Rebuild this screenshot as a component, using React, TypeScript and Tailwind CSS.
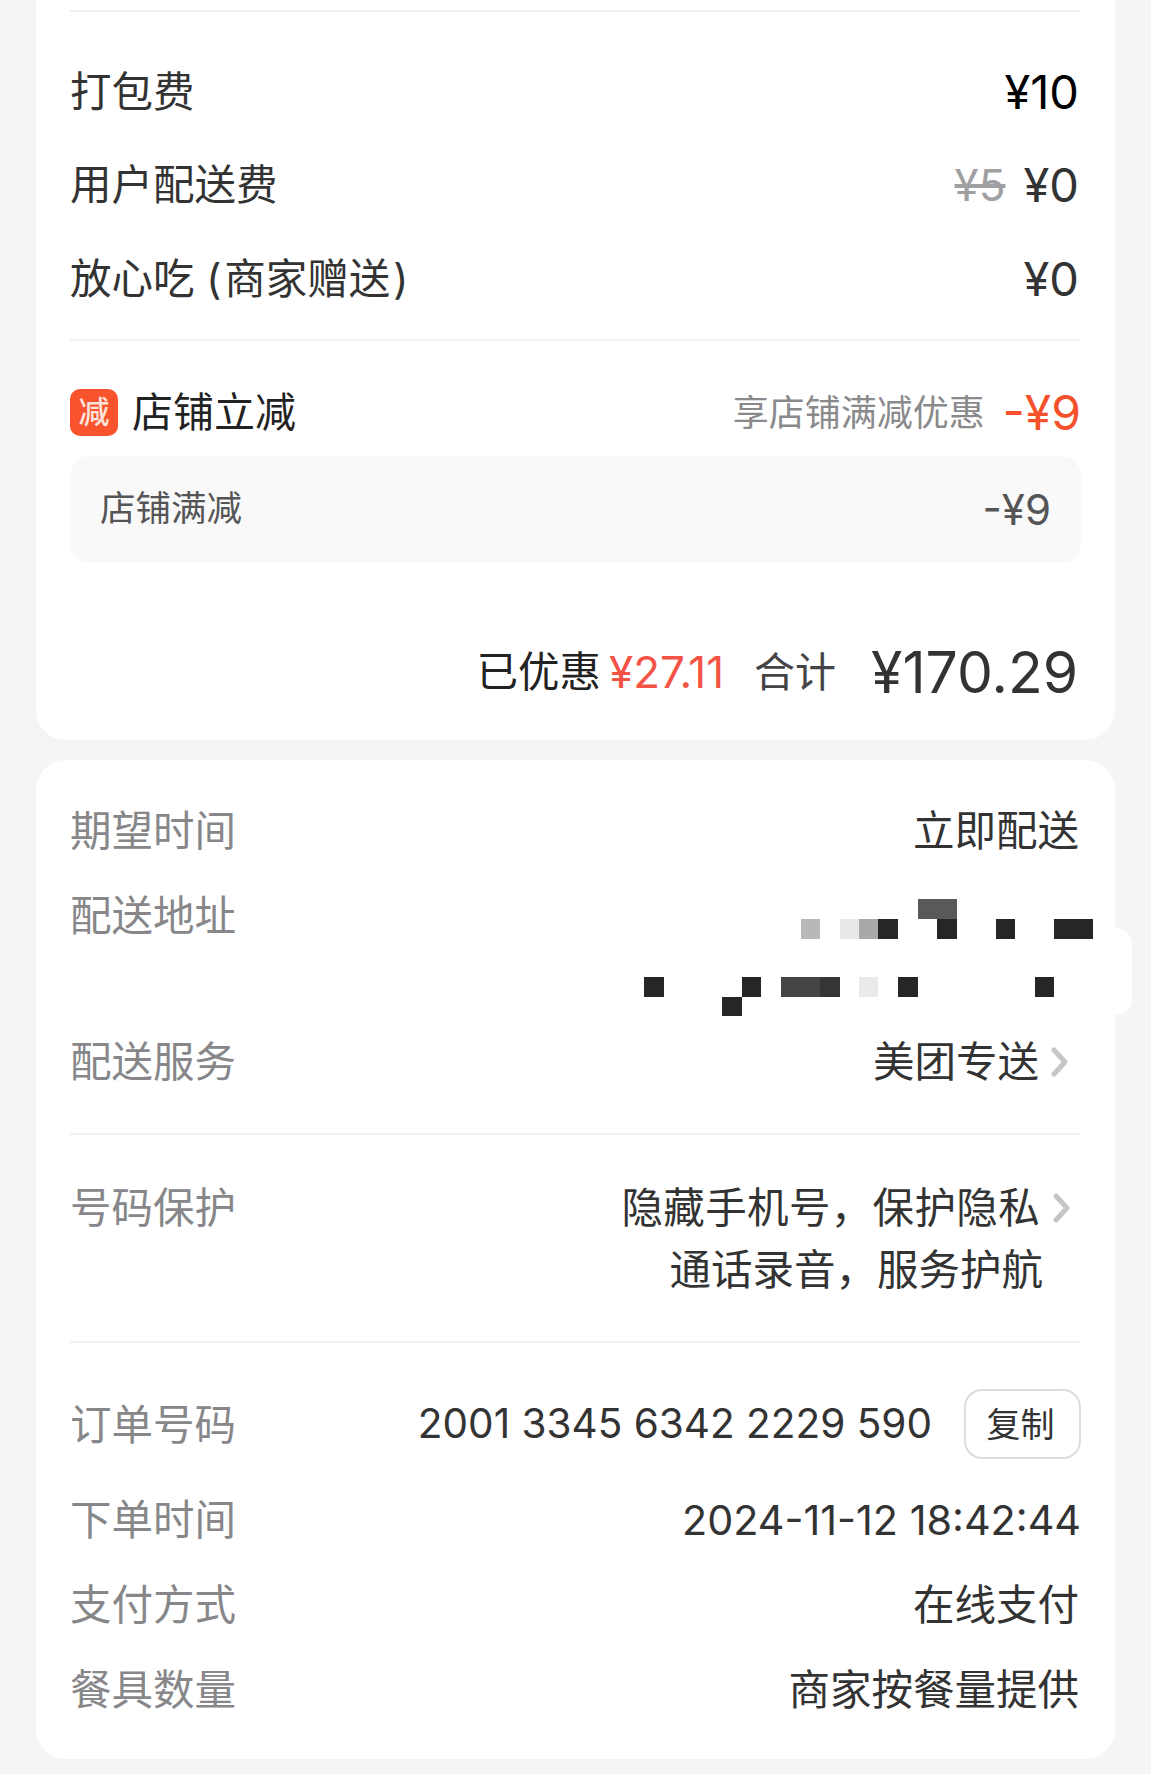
import React from 'react';

const font = { fontFamily: 'Inter, "Noto Sans CJK SC", sans-serif' };

// mosaic squares over the delivery address, in page coordinates
const mosaic = [
  [801, 919, 19, 20, '#b8b8ba'],
  [840, 919, 19, 20, '#e8e8ea'],
  [859, 919, 19, 20, '#a9a9ab'],
  [878, 919, 20, 20, '#262628'],
  [918, 899, 39, 20, '#59595b'],
  [937, 919, 20, 20, '#262628'],
  [996, 919, 19, 20, '#262628'],
  [1054, 919, 39, 20, '#262628'],
  [644, 977, 20, 20, '#262628'],
  [742, 977, 19, 20, '#262628'],
  [722, 997, 20, 19, '#262628'],
  [781, 977, 39, 20, '#444446'],
  [820, 977, 20, 20, '#353537'],
  [859, 977, 19, 20, '#eaeaea'],
  [898, 977, 20, 20, '#262628'],
  [1035, 977, 19, 20, '#262628'],
] as const;

const Chevron: React.FC = () => (
  <svg width="18" height="30" viewBox="0 0 18 30" className="shrink-0">
    <path d="M3 3 L14 15 L3 27" fill="none" stroke="#c6c6c8" strokeWidth="5" strokeLinecap="round" strokeLinejoin="round" />
  </svg>
);

const FeeRow: React.FC<{ label: React.ReactNode; children: React.ReactNode }> = ({ label, children }) => (
  <div className="flex h-[93.5px] items-center justify-between text-[41.5px] text-[#333333]">
    <span>{label}</span>
    {children}
  </div>
);

const InfoRow: React.FC<{ label: string; value: string; height: string }> = ({ label, value, height }) => (
  <div className={`flex items-center justify-between text-[41.5px] ${height}`}>
    <span className="text-[#87878a]">{label}</span>
    <span className="pr-[2px] text-[#333333]">{value}</span>
  </div>
);

const App: React.FC = () => {
  return (
    <div className="relative flex h-[1774px] w-full flex-col gap-[20px] overflow-hidden bg-[#f5f5f7] px-[36px]" style={font}>
      <section className="h-[740px] rounded-b-[30px] bg-white px-[34px] pt-[10px]">
        <div className="h-[2px] bg-[#f1f1f3]" />
        <div className="pt-[33px] pb-[13px]">
          <FeeRow label="打包费">
            <span className="pr-[2px] text-[47px] text-black">¥10</span>
          </FeeRow>
          <FeeRow label="用户配送费">
            <span className="flex items-center gap-[18px] pr-[2px] text-[47px]">
              <span className="text-[44px] text-[#a0a0a2] line-through">¥5</span>
              <span>¥0</span>
            </span>
          </FeeRow>
          <FeeRow label={<>放心吃 (<span className="mx-[3px]">商家赠送</span>)</>}>
            <span className="pr-[2px] text-[47px]">¥0</span>
          </FeeRow>
        </div>
        <div className="h-[2px] bg-[#f1f1f3]" />
        <div className="flex h-[115px] items-center justify-between pt-[29px]">
          <div className="flex items-center gap-[14px]">
            <span className="flex h-[47px] w-[48px] items-center justify-center rounded-[10px] bg-[#f9532d] text-[31px] font-medium text-[#fde3da]">减</span>
            <span className="text-[41px] text-[#222222]">店铺立减</span>
          </div>
          <div className="flex items-center gap-[18px]">
            <span className="text-[36px] text-[#8a8a8c]">享店铺满减优惠</span>
            <span className="text-[48px] leading-none text-[#f4512c]">-¥9</span>
          </div>
        </div>
        <div className="flex h-[107px] items-center justify-between rounded-[20px] bg-[#f9f9fa] px-[30px] text-[35.5px] text-[#555557]">
          <span>店铺满减</span>
          <span className="text-[42px]">-¥9</span>
        </div>
        <div className="mt-[67px] flex items-center justify-end pr-[3px]">
          <span className="text-[41.5px] text-[#222222]">已优惠</span>
          <span className="ml-[8px] text-[44px] text-[#f25345]">¥27.11</span>
          <span className="ml-[30px] text-[41px] text-[#444446]">合计</span>
          <span className="ml-[35px] text-[57px] text-[#333333]">¥170.29</span>
        </div>
      </section>

      <section className="h-[999px] rounded-[30px] bg-white px-[34px] pt-[29px]">
        <InfoRow label="期望时间" value="立即配送" height="h-[84px]" />
        <div className="h-[146px] text-[41.5px] leading-[86px] text-[#87878a]">配送地址</div>
        <div className="flex h-[86px] items-center justify-between text-[41.5px]">
          <span className="text-[#87878a]">配送服务</span>
          <span className="flex items-center gap-[12px] pr-[12px] text-[#333333]">
            美团专送
            <Chevron />
          </span>
        </div>
        <div className="mt-[28px] h-[2px] bg-[#f1f1f3]" />
        <div className="flex justify-between pt-[42px] pb-[40px] text-[41.5px] leading-[62px]">
          <span className="text-[#87878a]">号码保护</span>
          <div className="flex flex-col items-end pr-[38px] text-[#333333]">
            <span className="relative pr-[3px] tracking-[0.35px]">
              隐藏手机号，保护隐私
              <span className="absolute top-[16px] right-[-28px]">
                <Chevron />
              </span>
            </span>
            <span>通话录音，服务护航</span>
          </div>
        </div>
        <div className="h-[2px] bg-[#f1f1f3]" />
        <div className="mt-[46px] flex h-[70px] items-center justify-between">
          <span className="pt-[2px] text-[41.5px] text-[#87878a]">订单号码</span>
          <div className="flex items-center gap-[32px]">
            <span className="text-[40.5px] text-[#333333]">2001 3345 6342 2229 590</span>
            <button className="flex h-[70px] w-[117px] items-center justify-center rounded-[18px] border-2 border-[#dcdcde] bg-white pr-[4px] text-[34px] text-[#333333]">复制</button>
          </div>
        </div>
        <div className="mt-[19px]">
          <div className="flex h-[85px] items-center justify-between text-[41.5px]">
            <span className="text-[#87878a]">下单时间</span>
            <span className="text-[41.3px] text-[#333333]">2024-11-12 18:42:44</span>
          </div>
          <InfoRow label="支付方式" value="在线支付" height="h-[85px]" />
          <InfoRow label="餐具数量" value="商家按餐量提供" height="h-[85px]" />
        </div>
      </section>

      {/* white tab poking out of the right edge behind the address */}
      <div className="absolute top-[928px] left-[1115px] h-[87px] w-[17px] rounded-r-[16px] bg-white" />

      <svg className="absolute top-0 left-0" width="1151" height="1100" viewBox="0 0 1151 1100">
        {mosaic.map(([x, y, w, h, fill], i) => (
          <rect key={i} x={x} y={y} width={w} height={h} fill={fill} />
        ))}
      </svg>
    </div>
  );
};

export default App;
